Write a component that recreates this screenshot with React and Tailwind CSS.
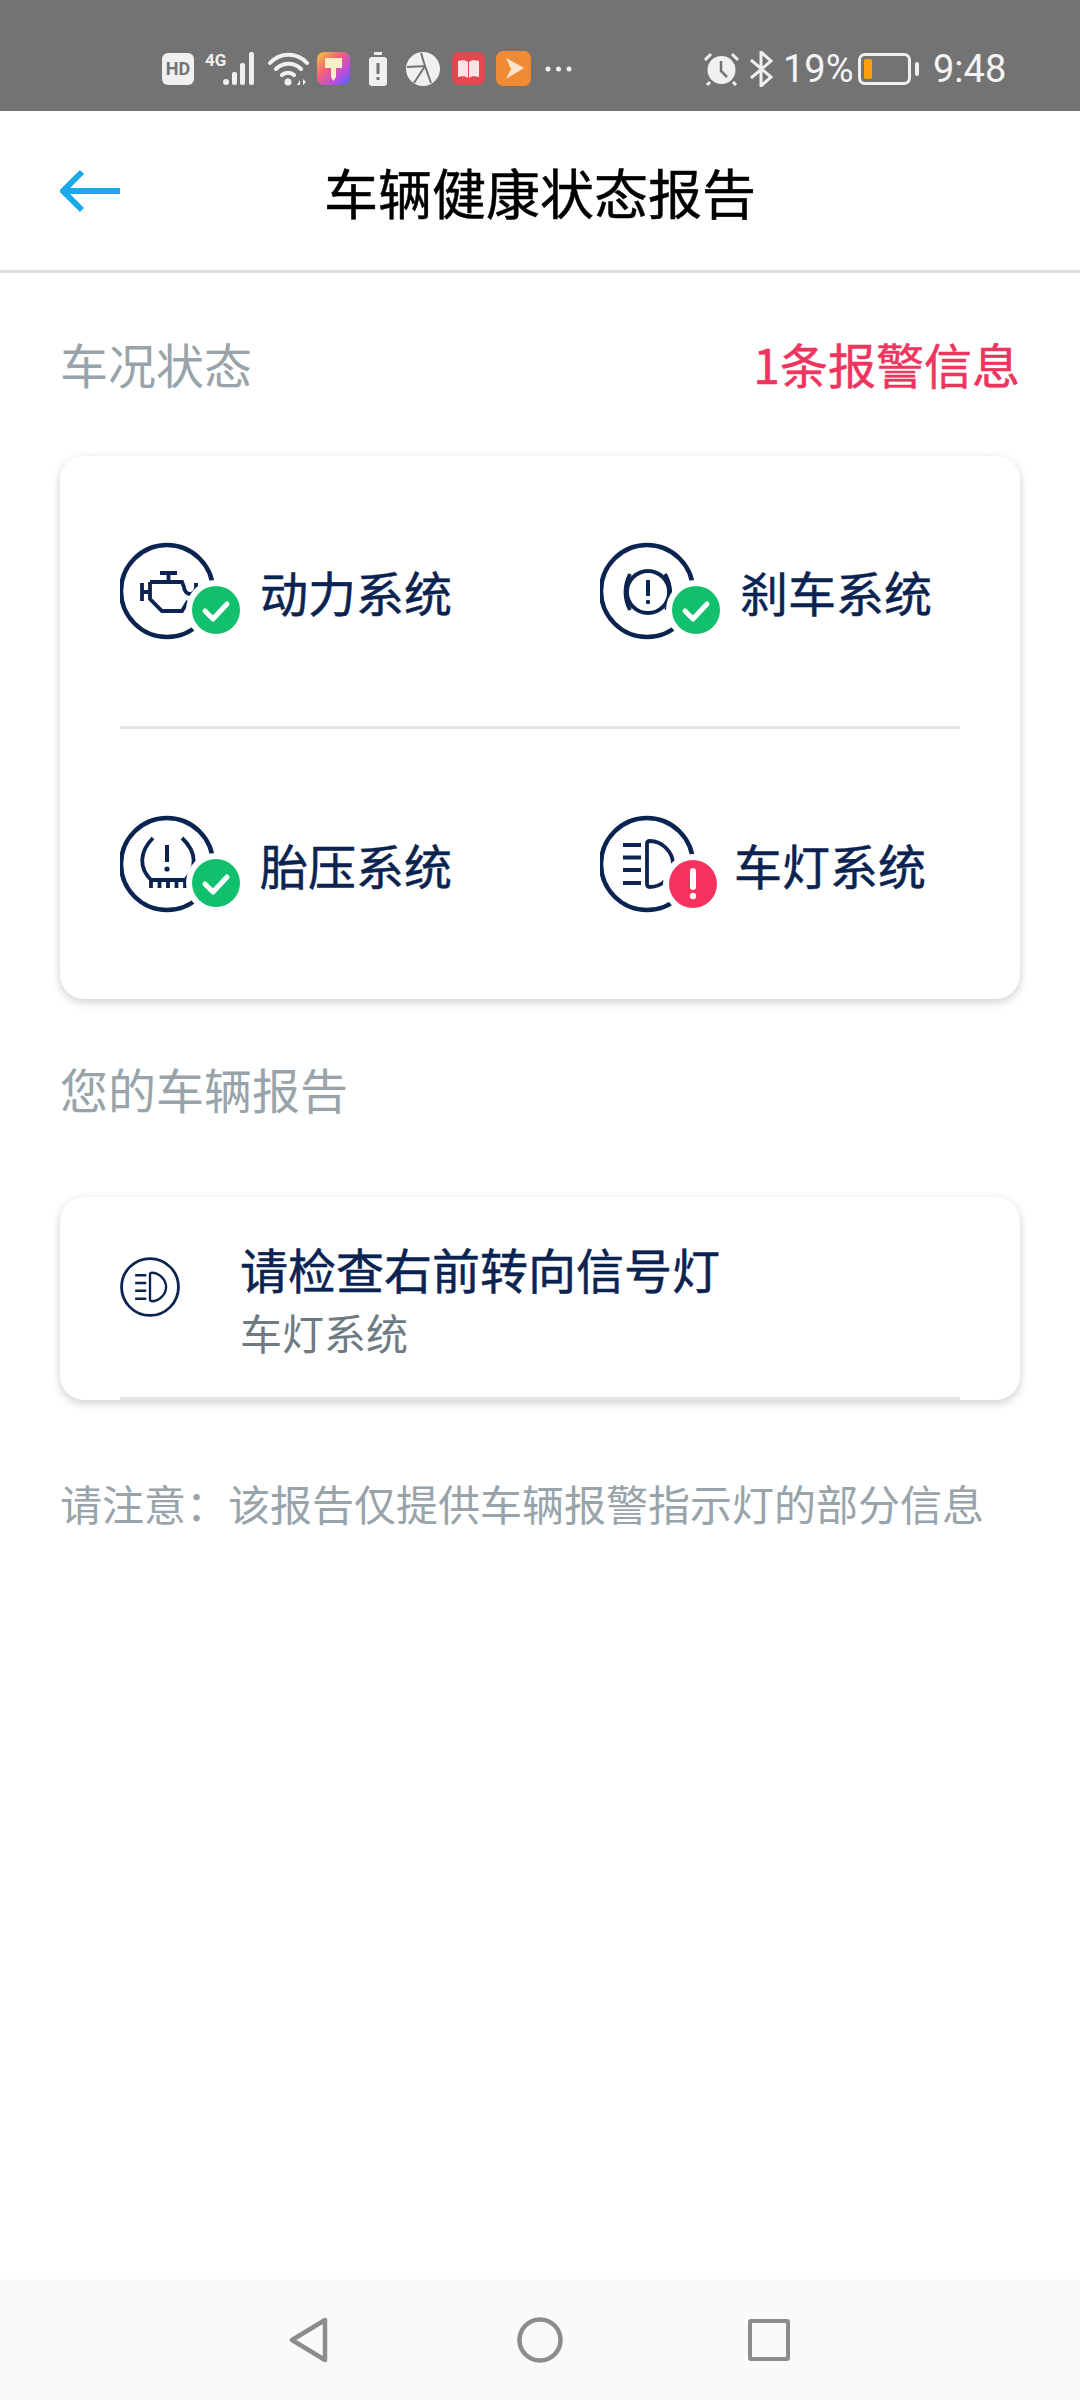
const NAVY = '#0b2350';
const FONT = "font-['Noto_Sans_CJK_SC','Noto_Sans',sans-serif]";

function Circle() {
  return <circle cx="47" cy="50" r="46" fill="none" stroke={NAVY} strokeWidth="4.500" />;
}

function Badge({ alert }) {
  if (alert) {
    return (
      <g>
        <circle cx="93" cy="70" r="30" fill="#fff" />
        <circle cx="93" cy="70" r="24" fill="#f5325d" />
        <path d="M93 57v16" stroke="#fff" strokeWidth="6" strokeLinecap="round" />
        <circle cx="93" cy="82" r="3.200" fill="#fff" />
      </g>
    );
  }
  return (
    <g>
      <circle cx="96" cy="69" r="30" fill="#fff" />
      <circle cx="96" cy="69" r="24" fill="#10c06c" />
      <path d="M85 70l8 8 14-15" fill="none" stroke="#fff" strokeWidth="5" strokeLinecap="round" strokeLinejoin="round" />
    </g>
  );
}

function Engine() {
  return (
    <g fill="none" stroke={NAVY} strokeWidth="3.800">
      <path d="M40 32h17M48.500 32v9M22 42v18M22 51h8" />
      <path d="M30 41H62l2 5c0 4 3 7 6 7s6-3 6-7v-4M68 60l-6 10H42L30 58V41" />
    </g>
  );
}

function Brake() {
  return (
    <g fill="none" stroke={NAVY} strokeWidth="3.800">
      <circle cx="48" cy="51" r="21" />
      <path d="M30 33Q21 51 30 69M65 33Q75 51 66 69" />
      <path d="M48 39v16" strokeWidth="4" />
      <circle cx="48" cy="61" r="2.200" fill={NAVY} stroke="none" />
    </g>
  );
}

function Tire() {
  return (
    <g fill="none" stroke={NAVY} strokeWidth="3.800">
      <path d="M33 24C19 38 19 54 31 66H65C77 54 77 38 62 24" />
      <path d="M31 66v8M39.500 66v8M48 66v8M56.500 66v8M65 66v8" />
      <path d="M47 31v17" strokeWidth="4" />
      <circle cx="47" cy="55" r="2.600" fill={NAVY} stroke="none" />
    </g>
  );
}

function Headlight() {
  return (
    <g fill="none" stroke={NAVY} strokeWidth="3.800">
      <path d="M23 31h18M23 43.500h18M23 56h18M23 69h18" />
      <path d="M50 27C62 27 73 38 73 50S62 73 50 73Q47 73 47 70V30Q47 27 50 27Z" />
    </g>
  );
}

function SystemItem({ glyph, label, alert }) {
  return (
    <div className={`flex items-center ${alert ? 'gap-[4px]' : 'gap-[10px]'}`}>
      <svg width="130" height="100" viewBox="0 0 130 100">
        <Circle />
        {glyph}
        <Badge alert={alert} />
      </svg>
      <span className="text-[48px] leading-[60px] [-webkit-text-stroke:0.5px]" style={{ color: NAVY }}>{label}</span>
    </div>
  );
}

function StatusIcons() {
  return (
    <>
      <svg className="overflow-visible" width="32" height="32" viewBox="0 0 32 32">
        <rect width="32" height="32" rx="6" fill="#f0f0f0" />
        <text x="16" y="22" textAnchor="middle" fontSize="18" fontWeight="700" fill="#737373" fontFamily="Roboto">HD</text>
      </svg>
      <svg className="ml-[11px] overflow-visible" width="54" height="34" viewBox="0 0 54 34" fill="#f0f0f0">
        <text x="0" y="14" fontSize="17" fontWeight="700" fontFamily="Roboto">4G</text>
        <circle cx="21" cy="30" r="3" />
        <rect x="27" y="20" width="5" height="13" rx="2" />
        <rect x="35" y="11" width="5" height="22" rx="2" />
        <rect x="44" y="0" width="5" height="33" rx="2" />
      </svg>
      <svg className="ml-[9px]" width="42" height="34" viewBox="0 0 42 34" fill="none" stroke="#f0f0f0" strokeWidth="4" strokeLinecap="round">
        <path d="M2 11C12 0 29 0 39 11M8 17C15 10 26 10 33 17M14 23C17 20 23 20 26 23" />
        <circle cx="20" cy="30" r="3.500" fill="#f0f0f0" stroke="none" />
        <path d="M29 33l3-5v5zM35 27v6l3-3z" fill="#f0f0f0" stroke="none" />
      </svg>
      <svg className="ml-[7px]" width="33" height="33" viewBox="0 0 33 33">
        <defs>
          <linearGradient id="paint" x1="0" y1="0" x2="1" y2="1">
            <stop offset="0" stopColor="#f7c938" />
            <stop offset="0.4" stopColor="#f0607a" />
            <stop offset="0.7" stopColor="#c04ce0" />
            <stop offset="1" stopColor="#3f6cf0" />
          </linearGradient>
        </defs>
        <rect width="33" height="33" rx="7" fill="url(#paint)" />
        <path d="M8 6h17v10h-6v9l-2.500 4-2.500-4v-9H8z" fill="#f7efc8" />
      </svg>
      <svg className="ml-[19px]" width="18" height="34" viewBox="0 0 18 34">
        <rect x="5" y="0" width="8" height="3" fill="#f0f0f0" />
        <rect y="5" width="18" height="29" rx="3" fill="#f0f0f0" />
        <rect x="7.500" y="11" width="3" height="11" fill="#737373" />
        <rect x="7.500" y="25" width="3" height="3" fill="#737373" />
      </svg>
      <svg className="ml-[19px]" width="34" height="34" viewBox="0 0 34 34">
        <circle cx="17" cy="17" r="17" fill="#f0f0f0" />
        <path d="M1 15L19 14L25 31M19 14L8 31M19 14L15 1" fill="none" stroke="#737373" strokeWidth="2" />
      </svg>
      <svg className="ml-[12px]" width="33" height="33" viewBox="0 0 33 33">
        <rect width="33" height="33" rx="7" fill="#e2484f" />
        <path d="M6 9c4-1 8-1 10 1v16c-2-2-6-2-10-1zM27 9c-4-1-8-1-10 1v16c2-2 6-2 10-1z" fill="#f8e4e4" />
      </svg>
      <svg className="ml-[11px]" width="35" height="35" viewBox="0 0 35 35">
        <rect width="35" height="35" rx="7" fill="#f08a33" />
        <path d="M10 7L28 17L10 28L15 18z" fill="#fbe3cf" />
      </svg>
      <svg className="ml-[14px]" width="27" height="6" viewBox="0 0 27 6" fill="#f0f0f0">
        <circle cx="3" cy="3" r="2.500" />
        <circle cx="13.500" cy="3" r="2.500" />
        <circle cx="24" cy="3" r="2.500" />
      </svg>
    </>
  );
}

function RightStatus() {
  return (
    <>
      <svg className="ml-[131px]" width="37" height="34" viewBox="0 0 37 34">
        <circle cx="18.500" cy="18" r="14" fill="#f0f0f0" />
        <path d="M18 9v10l6 6" fill="none" stroke="#737373" strokeWidth="2.500" />
        <path d="M2 8L8 2M35 8L29 2M7 30l-3 3M30 30l3 3" stroke="#f0f0f0" strokeWidth="3" />
      </svg>
      <svg className="ml-[10px]" width="23" height="36" viewBox="0 0 23 36" fill="none" stroke="#f0f0f0" strokeWidth="3">
        <path d="M1 9L21 26L11 35V1L21 10L1 27" />
      </svg>
      <span className="ml-[10px] w-[65px] text-[38px] leading-[44px] font-['Roboto',sans-serif] font-normal text-[#f4f4f4]">19%</span>
      <div className="ml-[10px] flex items-center">
        <div className="w-[53px] h-[32px] rounded-[7px] border-[3px] border-[#f0f0f0] p-[3px]">
          <div className="w-[8px] h-full rounded-[2px] bg-[#ff9f0a]" />
        </div>
        <div className="ml-[4px] w-[4px] h-[14px] rounded-[2px] bg-[#f0f0f0]" />
      </div>
      <span className="ml-[14px] text-[38px] leading-[44px] font-['Roboto',sans-serif] font-normal text-[#f4f4f4]">9:48</span>
    </>
  );
}

export default function App() {
  return (
    <div className={`h-[2400px] w-[1080px] flex flex-col bg-white ${FONT}`}>
      {/* Status bar */}
      <div className="h-[111px] shrink-0 bg-[#737373] flex items-center pl-[162px] pt-[26px]">
        <StatusIcons />
        <RightStatus />
      </div>

      {/* Header */}
      <div className="h-[162px] shrink-0 border-b-[3px] border-[#e0e0e0] grid grid-cols-[1fr_auto_1fr] items-center px-[60px]">
        <svg width="62" height="44" viewBox="0 0 62 44" fill="none" stroke="#1aa9ea" strokeWidth="6">
          <path d="M2 22H60M22 3L3 22L22 41" />
        </svg>
        <h1 className="mt-[2px] text-[54px] leading-[70px] font-normal text-black [-webkit-text-stroke:0.5px]">车辆健康状态报告</h1>
        <div />
      </div>

      <main className="flex-1 px-[60px]">
        <div className="mt-[60px] h-[60px] flex items-center justify-between">
          <span className="text-[48px] leading-[60px] text-[#98a4aa]">车况状态</span>
          <span className="text-[48px] leading-[60px] text-[#ee3560] [-webkit-text-stroke:0.5px]">1条报警信息</span>
        </div>

        <section className="mt-[63px] h-[543px] rounded-[24px] bg-white shadow-[0_3px_10px_rgba(0,0,0,0.2)] px-[60px] flex flex-col">
          <div className="flex-1 grid grid-cols-[480px_360px] items-center border-b-[3px] border-[#dde3e6]">
            <SystemItem glyph={<Engine />} label="动力系统" />
            <SystemItem glyph={<Brake />} label="刹车系统" />
          </div>
          <div className="flex-1 grid grid-cols-[480px_360px] items-center">
            <SystemItem glyph={<Tire />} label="胎压系统" />
            <SystemItem glyph={<Headlight />} label="车灯系统" alert />
          </div>
        </section>

        <h2 className="mt-[59px] h-[60px] text-[48px] leading-[60px] font-normal text-[#98a4aa]">您的车辆报告</h2>

        <section className="mt-[79px] h-[203px] rounded-[24px] bg-white shadow-[0_3px_10px_rgba(0,0,0,0.2)] px-[60px] flex flex-col">
          <div className="flex-1 flex items-center border-b-[3px] border-[#e3e6e8]">
            <svg className="self-start mt-[60px]" width="60" height="60" viewBox="-1.500 1.500 97 97">
              <Circle />
              <Headlight />
            </svg>
            <div className="ml-[60px] flex flex-col">
              <span className="text-[48px] leading-[60px] [-webkit-text-stroke:0.5px]" style={{ color: NAVY }}>请检查右前转向信号灯</span>
              <span className="mt-[9px] text-[42px] leading-[50px] text-[#6f7b82]">车灯系统</span>
            </div>
          </div>
        </section>

        <p className="mt-[73px] text-[42px] leading-[60px] text-[#98a4aa]">请注意：该报告仅提供车辆报警指示灯的部分信息</p>
      </main>

      {/* Navigation bar */}
      <div className="h-[121px] shrink-0 bg-[#fafafa] flex items-start pl-[289px] pt-[38px]">
        <svg width="40" height="46" viewBox="0 0 40 46" fill="none" stroke="#8c8c8c" strokeWidth="4.500" strokeLinejoin="round">
          <path d="M36 3V43L3 23Z" />
        </svg>
        <svg className="ml-[188px]" width="46" height="46" viewBox="0 0 46 46" fill="none" stroke="#8c8c8c" strokeWidth="4.500">
          <circle cx="23" cy="23" r="20.500" />
        </svg>
        <div className="ml-[185px] mt-[2px] w-[42px] h-[42px] rounded-[3px] border-[4px] border-[#8c8c8c]" />
      </div>
    </div>
  );
}
